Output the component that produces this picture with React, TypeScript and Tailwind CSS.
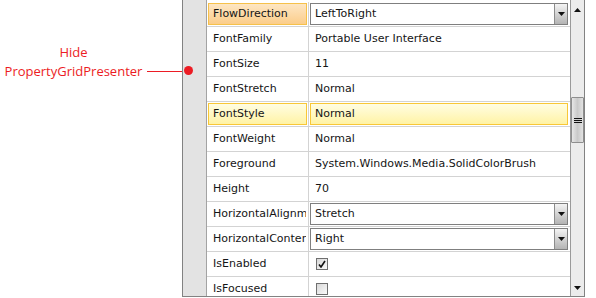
import { ReactNode } from "react"

type Row = {
  name: string
  value?: string
  kind?: "text" | "combo" | "check"
  checked?: boolean
  hl?: "orange" | "yellow"
}

const rows: Row[] = [
  { name: "FlowDirection", value: "LeftToRight", kind: "combo", hl: "orange" },
  { name: "FontFamily", value: "Portable User Interface" },
  { name: "FontSize", value: "11" },
  { name: "FontStretch", value: "Normal" },
  { name: "FontStyle", value: "Normal", hl: "yellow" },
  { name: "FontWeight", value: "Normal" },
  { name: "Foreground", value: "System.Windows.Media.SolidColorBrush" },
  { name: "Height", value: "70" },
  { name: "HorizontalAlignment", value: "Stretch", kind: "combo" },
  { name: "HorizontalContentAlignment", value: "Right", kind: "combo" },
  { name: "IsEnabled", kind: "check", checked: true },
  { name: "IsFocused", kind: "check", checked: false },
]

const font = "font-['DejaVu_Sans',sans-serif] text-[11px] text-[#151515]"

function Combo({ children }: { children: ReactNode }) {
  return (
    <div className="mx-[1px] flex h-[22px] w-full items-stretch border border-[#7f7f7f] bg-white">
      <div className="flex flex-1 items-center overflow-hidden whitespace-nowrap pl-[4px]">{children}</div>
      <div className="flex w-[13px] items-center justify-center border-l border-[#8c8c8c] bg-gradient-to-b from-[#f4f4f4] to-[#b4b4b4]">
        <svg width="7" height="4" viewBox="0 0 7 4">
          <path d="M0 0h7L3.5 4z" fill="#111" />
        </svg>
      </div>
    </div>
  )
}

function Check({ checked }: { checked: boolean }) {
  return (
    <div className="ml-[7px] flex h-[12px] w-[12px] items-center justify-center border border-[#6f6f6f] bg-gradient-to-br from-[#d8d8d8] to-[#fafafa]">
      {checked && (
        <svg width="8" height="8" viewBox="0 0 8 8">
          <path d="M1 4.5 3 7 7 1" stroke="#111" strokeWidth="1.6" fill="none" />
        </svg>
      )}
    </div>
  )
}

function GridRow({ row }: { row: Row }) {
  const nameBox =
    row.hl === "orange"
      ? "border border-[#f6c14a] bg-gradient-to-b from-[#fde6c3] to-[#fbcd8a]"
      : row.hl === "yellow"
        ? "border border-[#f8c737] bg-gradient-to-b from-[#fffde2] to-[#fff3a4]"
        : "border border-transparent"
  return (
    <div className="flex h-[25px] shrink-0 border-b border-[#d3d3d3]">
      <div className="flex w-[102px] items-center border-r border-[#d3d3d3] px-[1px]">
        <div className={`flex h-[22px] w-full items-center overflow-hidden whitespace-nowrap pl-[4px] ${nameBox}`}>
          {row.name}
        </div>
      </div>
      <div className="flex flex-1 items-center pr-[1px]">
        {row.kind === "combo" ? (
          <Combo>{row.value}</Combo>
        ) : row.kind === "check" ? (
          <Check checked={!!row.checked} />
        ) : (
          <div
            className={`mx-[1px] flex h-[22px] w-full items-center whitespace-nowrap pl-[4px] ${
              row.hl === "yellow"
                ? "border border-[#f8c737] bg-gradient-to-b from-[#fffde2] to-[#fff3a4]"
                : "border border-transparent"
            }`}
          >
            {row.value}
          </div>
        )}
      </div>
    </div>
  )
}

function ScrollBar() {
  return (
    <div className="flex w-[14px] flex-col items-center border-l border-[#9a9a9a] bg-[#ececec]">
      <svg className="mt-[8px]" width="7" height="4" viewBox="0 0 7 4">
        <path d="M3.5 0 7 4H0z" fill="#111" />
      </svg>
      {/* thumb */}
      <div className="mt-[85px] flex h-[46px] w-[13px] items-center justify-center rounded-[1px] border border-[#8e8e8e] bg-gradient-to-r from-[#e6e6e6] via-[#c9c9c9] to-[#e2e2e2]">
        <div className="flex flex-col gap-[1px]">
          <div className="h-[1px] w-[8px] bg-[#111]" />
          <div className="h-[1px] w-[8px] bg-[#111]" />
          <div className="h-[1px] w-[8px] bg-[#111]" />
        </div>
      </div>
      <div className="flex-1" />
      <svg className="mb-[6px]" width="7" height="4" viewBox="0 0 7 4">
        <path d="M0 0h7L3.5 4z" fill="#111" />
      </svg>
    </div>
  )
}

export default function App() {
  return (
    <div className="flex h-[298px] w-[596px] items-start overflow-hidden bg-white">
      {/* Annotation */}
      <div className="flex h-[297px] w-[182px] items-start">
        <div className="flex w-[147px] flex-col items-center pt-[43px] font-['Open_Sans',sans-serif] text-[13px] leading-[19px] text-[#ec1c24]">
          <span>Hide</span>
          <span>PropertyGridPresenter</span>
        </div>
        <div className="mt-[71px] h-[1px] flex-1 bg-[#ec1c24]" />
      </div>

      {/* Property grid */}
      <div className={`relative flex h-[297px] w-[403px] border-x border-b border-[#828282] ${font}`}>
        <div className="absolute left-[1px] top-[66px] h-[9px] w-[9px] rounded-full bg-[#ec1c24]" />
        <div className="w-[24px] border-r border-[#a3a3a3] bg-[#e3e3e3]" />
        <div className="flex flex-1 flex-col overflow-hidden pt-[2px]">
          {rows.map((r) => (
            <GridRow key={r.name} row={r} />
          ))}
        </div>
        <ScrollBar />
      </div>
    </div>
  )
}
